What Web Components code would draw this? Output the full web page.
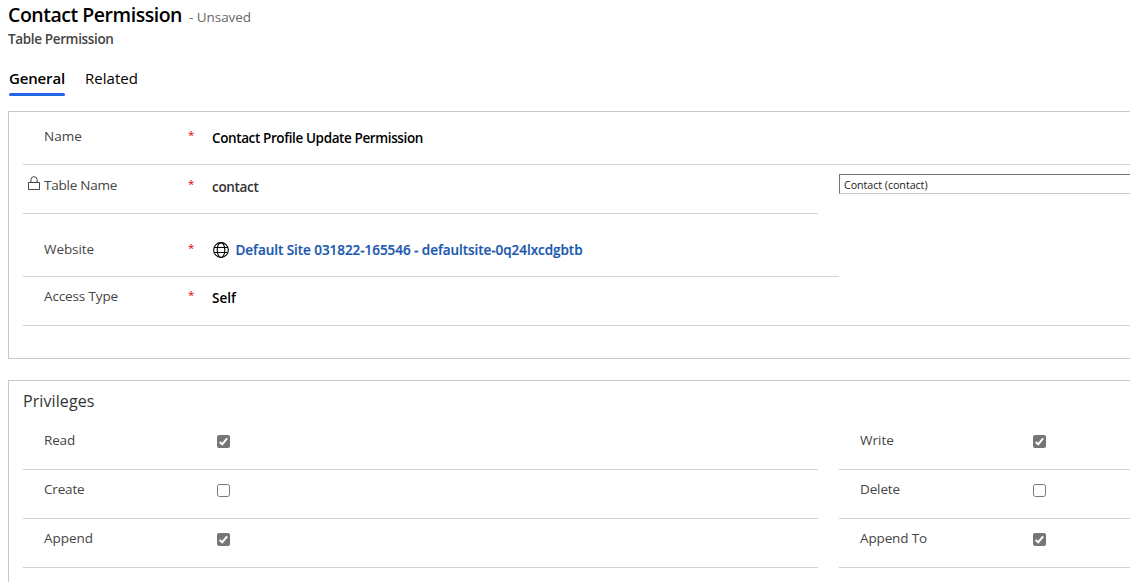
<!DOCTYPE html>
<html lang="en">
<head>
<meta charset="utf-8">
<title>Contact Permission</title>
<style>
html,body{margin:0;height:100%;background:#fff;overflow:hidden}
body{font-family:"Open Sans","Noto Sans",sans-serif;font-size:13.5px;line-height:20px;color:#333}
</style>
</head>
<body>
<permission-page></permission-page>
<script>
const define = (name, html, setup) => customElements.define(name, class extends HTMLElement {
  constructor() {
    super();
    this.attachShadow({mode: 'open'}).innerHTML = html;
  }
  connectedCallback() { if (setup) setup(this, this.shadowRoot); }
});

// A single line of text tracked so that it spans the width given in its "span" attribute.
define('tracked-text', `<style>
:host{display:inline-block;white-space:nowrap}
</style><slot></slot>`, el => {
  const width = el.getBoundingClientRect().width;
  const n = el.textContent.length;
  if (width && el.hasAttribute('span')) el.style.letterSpacing = ((+el.getAttribute('span') - width) / n).toFixed(3) + 'px';
});

define('lock-icon', `<style>:host{display:block;width:12px;height:15px}svg{display:block}</style>
<svg width="12" height="15" viewBox="0 0 12 15" fill="none" stroke="#444" stroke-width="1"><path d="M.5 6.5h11v7H.5z"/><path d="M2.9 6.5V3.8a3 3 0 0 1 6.2 0v2.7"/></svg>`);

define('globe-icon', `<style>:host{display:block;width:16px;height:16px}svg{display:block}</style>
<svg width="16" height="16" viewBox="0 0 16 16" fill="none" stroke="#000" stroke-width="1.05"><circle cx="8" cy="8" r="7.4"/><ellipse cx="8" cy="8" rx="3.8" ry="7.4"/><path d="M1.2 5.5h13.6M1.2 10.5h13.6"/></svg>`);

define('check-box', `<style>
:host{display:block;width:13px;height:13px}svg{display:block}
.on{display:none}:host([checked]) .on{display:block}:host([checked]) .off{display:none}
</style>
<svg class="on" width="13" height="13" viewBox="0 0 13 13"><rect width="13" height="13" rx="2" fill="#767676"/><path d="M2.7 7 5.2 9.3 10.1 3.3" fill="none" stroke="#fff" stroke-width="2.1"/></svg>
<svg class="off" width="13" height="13" viewBox="0 0 13 13"><rect x=".5" y=".5" width="12" height="12" rx="2" fill="#fff" stroke="#767676"/></svg>`);

define('field-row', `<style>
:host{display:grid;grid-template-columns:21px 144px 24px 1fr;box-sizing:border-box;height:var(--h,49px);padding-top:var(--t,10px);border-bottom:1px solid #d3d3d3;align-items:start}
.icon{padding:1px 0 0 5px}
.label{color:#444}
.star{color:#e00000;font-size:11.5px;line-height:18px}
.value{display:flex;align-items:center;padding-top:var(--v,2px);color:#000}
</style>
<div class="icon"><slot name="icon"></slot></div><div class="label"><slot name="label"></slot></div><div class="star"></div><div class="value"><slot></slot></div>`,
(el, root) => { if (el.hasAttribute('required')) root.querySelector('.star').textContent = '*'; });

define('form-section', `<style>
:host{display:block;box-sizing:border-box;margin-left:8px;border:1px solid #c8c8c8;border-right:0;padding-left:14px}
</style><slot></slot>`);

define('page-header', `<style>
:host{display:block;height:111px;box-sizing:border-box;padding:1px 8px 0}
.title{display:flex;align-items:baseline;gap:7px;height:28px;line-height:27px}
h1{margin:0;font-size:19.5px;font-weight:600;color:#000;line-height:27px}
.state{color:#666;font-size:13.5px}
.sub{font-weight:600;color:#444;height:20px}
nav{display:flex;gap:20px;padding:19px 0 0 1px;font-size:15px;color:#000}
nav div{box-sizing:border-box;height:28px;line-height:20px}
.active{font-weight:600;position:relative}
.active::after{content:"";position:absolute;left:0;right:0;bottom:0;height:3px;border-radius:2px;background:#2266e3}
</style>
<div class="title"><h1><tracked-text span="174">Contact Permission</tracked-text></h1><tracked-text class="state" span="62">- Unsaved</tracked-text></div>
<div class="sub"><tracked-text span="105.5">Table Permission</tracked-text></div>
<nav><div class="active"><tracked-text span="56">General</tracked-text></div><div><tracked-text span="53">Related</tracked-text></div></nav>`);

define('permission-page', `<style>
:host{display:block;width:1130px;height:582px;overflow:hidden}
.general{height:248px;margin-bottom:21px}
.pair{display:grid;grid-template-columns:795px 1fr;column-gap:21px}
.lookup{box-sizing:border-box;height:20px;margin-top:9px;border:1px solid #767676;border-bottom-color:#c8c8c8;border-right:0;padding-left:4px;line-height:20px;font-size:10.7px;color:#222}
.value{font-weight:600}
.contact{color:#333}
.site{margin-left:6.5px;color:#1b58b0;font-weight:600;-webkit-text-stroke:.2px #1b58b0}
.privileges{height:230px}
h2{margin:0;height:40px;padding-top:9px;box-sizing:border-box;font-size:16px;font-weight:400;line-height:22px;color:#333}
.privileges field-row{--t:9px}
check-box{margin:3px 0 0 5px}
</style>
<page-header></page-header>
<form-section class="general">
<field-row required style="--h:53px;--t:14px"><tracked-text slot="label" span="38">Name</tracked-text><tracked-text class="value" span="211">Contact Profile Update Permission</tracked-text></field-row>
<div class="pair"><field-row required><lock-icon slot="icon"></lock-icon><tracked-text slot="label" span="73">Table Name</tracked-text><tracked-text class="value contact" span="46.5">contact</tracked-text></field-row>
<div class="lookup"><tracked-text span="83.5">Contact (contact)</tracked-text></div></div>
<field-row required style="--h:63px;--t:25px;--v:1px;width:816px"><tracked-text slot="label" span="50">Website</tracked-text><globe-icon style="margin-left:1px"></globe-icon><tracked-text class="site" span="347">Default Site 031822-165546 - defaultsite-0q24lxcdgbtb</tracked-text></field-row>
<field-row required style="--t:9px"><tracked-text slot="label" span="74">Access Type</tracked-text><tracked-text class="value" span="24">Self</tracked-text></field-row>
</form-section>
<form-section class="privileges">
<h2><tracked-text span="71.5">Privileges</tracked-text></h2>
<div class="pair">
<field-row><tracked-text slot="label" span="31">Read</tracked-text><check-box checked></check-box></field-row>
<field-row><tracked-text slot="label" span="34">Write</tracked-text><check-box checked></check-box></field-row>
<field-row><tracked-text slot="label" span="40.5">Create</tracked-text><check-box></check-box></field-row>
<field-row><tracked-text slot="label" span="40">Delete</tracked-text><check-box></check-box></field-row>
<field-row><tracked-text slot="label" span="49">Append</tracked-text><check-box checked></check-box></field-row>
<field-row><tracked-text slot="label" span="67">Append To</tracked-text><check-box checked></check-box></field-row>
</div>
</form-section>`);
</script>
</body>
</html>
